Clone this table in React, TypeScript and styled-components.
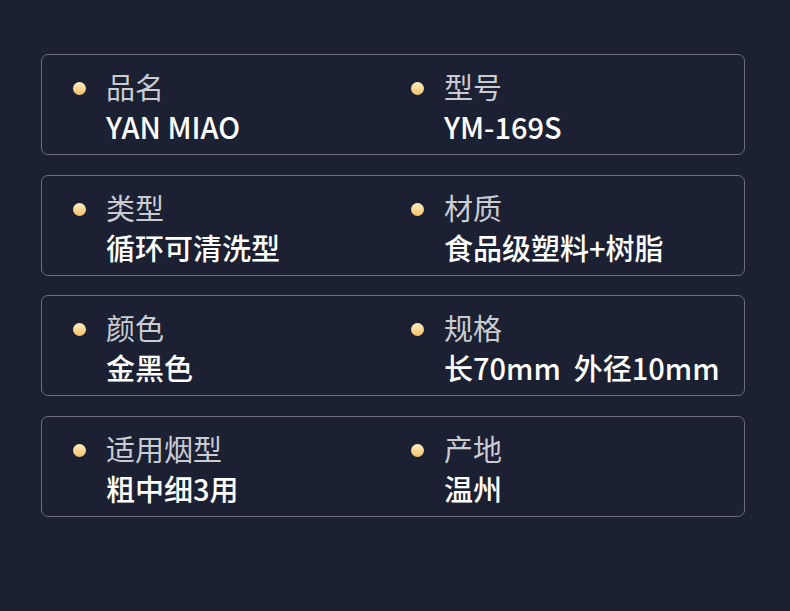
import styled, { createGlobalStyle } from 'styled-components';

const GlobalStyle = createGlobalStyle`
  html, body {
    margin: 0;
    padding: 0;
    background: #1c2033;
  }
  body {
    font-family: "Noto Sans CJK SC", "Noto Sans", sans-serif;
  }
`;

type Spec = { label: string; value: string };

const rows: Spec[][] = [
  [
    { label: '品名', value: 'YAN MIAO' },
    { label: '型号', value: 'YM-169S' },
  ],
  [
    { label: '类型', value: '循环可清洗型' },
    { label: '材质', value: '食品级塑料+树脂' },
  ],
  [
    { label: '颜色', value: '金黑色' },
    { label: '规格', value: '长70mm\u00a0\u00a0外径10mm' },
  ],
  [
    { label: '适用烟型', value: '粗中细3用' },
    { label: '产地', value: '温州' },
  ],
];

const App = () => {
  return (
    <Page>
      <GlobalStyle />
      {rows.map((row, i) => (
        <Card key={i}>
          {row.map((item) => (
            <Item key={item.label}>
              <Dot />
              <Texts>
                <Label>{item.label}</Label>
                <Value>{item.value}</Value>
              </Texts>
            </Item>
          ))}
        </Card>
      ))}
    </Page>
  );
};

export default App;

const Page = styled.div`
  width: 790px;
  height: 611px;
  box-sizing: border-box;
  padding: 54px 45px 0 41px;

  display: flex;
  flex-direction: column;
  gap: 19.7px;
`;

const Card = styled.div`
  height: 101px;
  box-sizing: border-box;
  padding: 3px 0 0 31px;

  border: 1px solid #6a6e80;
  border-radius: 7px;

  display: grid;
  grid-template-columns: 338px 1fr;
  align-items: center;
`;

const Item = styled.div`
  display: flex;
  align-items: flex-start;
  gap: 20px;
`;

const Dot = styled.div`
  width: 13px;
  height: 13px;
  margin-top: 16px;
  flex-shrink: 0;

  border-radius: 50%;
  background: linear-gradient(180deg, #fff0bf 0%, #f3c06a 100%);
`;

const Texts = styled.div`
  display: flex;
  flex-direction: column;
`;

const Label = styled.div`
  font-size: 29px;
  font-weight: 400;
  line-height: 40px;
  color: #cbccd2;
`;

const Value = styled.div`
  font-size: 29px;
  font-weight: 500;
  line-height: 40px;
  color: #ffffff;
`;
